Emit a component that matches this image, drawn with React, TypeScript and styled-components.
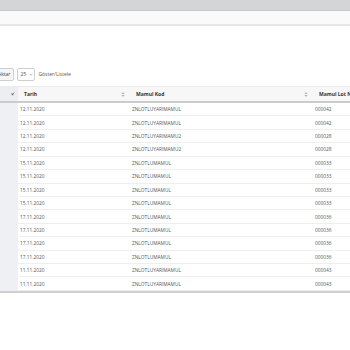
import styled, { createGlobalStyle } from 'styled-components';

const GlobalStyle = createGlobalStyle`
  html, body {
    margin: 0;
    padding: 0;
    background: #ffffff;
    overflow: hidden;
  }
  body {
    font-family: 'Open Sans', 'Liberation Sans', sans-serif;
  }
`;

const Page = styled.div`
  width: 350px;
  height: 350px;
  overflow: hidden;
  display: flex;
  flex-direction: column;
`;

const TopBar = styled.div`
  height: 10px;
  background: #d4d5d7;
  border-bottom: 1px solid #c6c7c9;
`;

const SubBar = styled.div`
  height: 13px;
  background: #fafafa;
  border-bottom: 2px solid #e8e8e8;
`;

const Content = styled.div`
  padding-top: 42px;
  display: flex;
  flex-direction: column;
`;

const Toolbar = styled.div`
  display: flex;
  align-items: center;
  gap: 2px;
  height: 12px;
  margin-left: -6px;
`;

const Button = styled.div`
  height: 11px;
  padding: 0 3px;
  border: 1px solid #cfcfcf;
  border-radius: 2px;
  background: #f6f6f6;
  color: #444;
  font-size: 5px;
  display: flex;
  align-items: center;
`;

const Select = styled.div`
  height: 11px;
  width: 13px;
  padding: 0 1px 0 2px;
  border: 1px solid #cfcfcf;
  border-radius: 2px;
  background: #fff;
  color: #555;
  font-size: 5px;
  display: flex;
  align-items: center;
  justify-content: space-between;
  margin-left: 1px;
`;

const Label = styled.span`
  font-size: 5px;
  color: #555;
  margin-left: 1px;
`;

const Table = styled.div`
  margin-top: 6px;
  width: 420px;
  display: flex;
  flex-direction: column;
  border-bottom: 2px solid #cfcfcf;
`;

const HeaderRow = styled.div`
  display: grid;
  grid-template-columns: 18px 112px 183px 107px;
  height: 14px;
  background: #f7f7f7;
  border-top: 1px solid #ececec;
  border-bottom: 2px solid #cccccc;
`;

const HeadCell = styled.div<{ $first?: boolean }>`
  display: flex;
  align-items: center;
  justify-content: ${(p) => (p.$first ? 'flex-end' : 'space-between')};
  padding: ${(p) => (p.$first ? '0 3px 0 0' : '0 5px 0 6px')};
  background: ${(p) => (p.$first ? '#eceef1' : 'transparent')};
  font-size: 5px;
  font-weight: 700;
  color: #333;
  white-space: nowrap;
`;

const Row = styled.div`
  display: grid;
  grid-template-columns: 18px 112px 183px 107px;
  height: 13.43px;
  border-bottom: 1px solid #efefef;
  box-sizing: border-box;
`;

const Cell = styled.div<{ $first?: boolean }>`
  display: flex;
  align-items: center;
  padding-left: 2px;
  background: ${(p) => (p.$first ? '#eef0f3' : 'transparent')};
  font-size: 4.8px;
  color: #555;
`;

const SortIcon = ({ active }: { active?: boolean }) =>
  active ? (
    <svg width="4" height="4" viewBox="0 0 8 8">
      <path d="M6.5 1 L2 5.5 M2 2.5 V5.5 H5" stroke="#444" strokeWidth="1.3" fill="none" />
    </svg>
  ) : (
    <svg width="4" height="5" viewBox="0 0 8 10">
      <path d="M1.5 4 L4 1.5 L6.5 4 M1.5 6 L4 8.5 L6.5 6" stroke="#666" strokeWidth="1.2" fill="none" />
    </svg>
  );

const Chevron = () => (
  <svg width="4" height="3" viewBox="0 0 8 5">
    <path d="M1 1 L4 4 L7 1" stroke="#777" strokeWidth="1" fill="none" />
  </svg>
);

const rows = [
  ['12.11.2020', 'ZNLOTLUYARIMAMUL', '000042'],
  ['12.11.2020', 'ZNLOTLUYARIMAMUL', '000042'],
  ['12.11.2020', 'ZNLOTLUYARIMAMU2', '000028'],
  ['12.11.2020', 'ZNLOTLUYARIMAMU2', '000028'],
  ['15.11.2020', 'ZNLOTLUMAMUL', '000033'],
  ['15.11.2020', 'ZNLOTLUMAMUL', '000033'],
  ['15.11.2020', 'ZNLOTLUMAMUL', '000033'],
  ['15.11.2020', 'ZNLOTLUMAMUL', '000033'],
  ['17.11.2020', 'ZNLOTLUMAMUL', '000036'],
  ['17.11.2020', 'ZNLOTLUMAMUL', '000036'],
  ['17.11.2020', 'ZNLOTLUMAMUL', '000036'],
  ['17.11.2020', 'ZNLOTLUMAMUL', '000036'],
  ['11.11.2020', 'ZNLOTLUYARIMAMUL', '000043'],
  ['11.11.2020', 'ZNLOTLUYARIMAMUL', '000043'],
];

const App = () => {
  return (
    <>
      <GlobalStyle />
      <Page>
        <TopBar />
        <SubBar />
        <Content>
          <Toolbar>
            <Button>Aktar</Button>
            <Select>
              25 <Chevron />
            </Select>
            <Label>Göster/Listele</Label>
          </Toolbar>
          <Table>
            <HeaderRow>
              <HeadCell $first>
                <SortIcon active />
              </HeadCell>
              <HeadCell>
                Tarih <SortIcon />
              </HeadCell>
              <HeadCell>
                Mamul Kod <SortIcon />
              </HeadCell>
              <HeadCell>
                Mamul Lot No <SortIcon />
              </HeadCell>
            </HeaderRow>
            {rows.map((r, i) => (
              <Row key={i}>
                <Cell $first />
                <Cell>{r[0]}</Cell>
                <Cell>{r[1]}</Cell>
                <Cell>{r[2]}</Cell>
              </Row>
            ))}
          </Table>
        </Content>
      </Page>
    </>
  );
};

export default App;
